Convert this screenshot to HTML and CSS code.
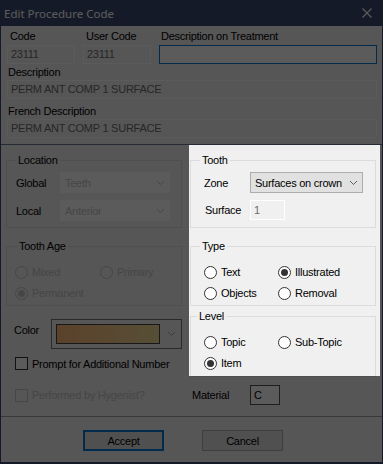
FILE: index.html
```html
<!DOCTYPE html>
<html lang="en">
<head>
  <meta charset="UTF-8">
  <title>Edit Procedure Code</title>
  <link rel="stylesheet" href="styles.css">
</head>
<body>
  <div class="window">
    <div class="titlebar">
      <span class="title">Edit Procedure Code</span>
      <svg class="close" width="10" height="10" viewBox="0 0 10 10"><path d="M0.5 0.5 L9.5 9.5 M9.5 0.5 L0.5 9.5" stroke="#fff" stroke-width="1.2" fill="none"/></svg>
    </div>

    <div class="top">
      <div class="code-row">
        <div class="field code">
          <label>Code</label>
          <div class="edit disabled">23111</div>
        </div>
        <div class="field code">
          <label>User Code</label>
          <div class="edit disabled">23111</div>
        </div>
        <div class="field grow">
          <label class="tight">Description on Treatment</label>
          <div class="edit focused"></div>
        </div>
      </div>
      <label class="lbl lbl-desc">Description</label>
      <div class="edit disabled">PERM ANT COMP 1 SURFACE</div>
      <label class="lbl lbl-french">French Description</label>
      <div class="edit disabled">PERM ANT COMP 1 SURFACE</div>
    </div>

    <div class="panel">
      <div class="col">
        <fieldset class="group location">
          <legend>Location</legend>
          <div class="form-grid left-grid">
            <span>Global</span>
            <div class="combo off">Teeth<svg class="chev" width="7" height="4" viewBox="0 0 7 4"><path d="M0 0 L3.5 3.5 L7 0" fill="none" stroke="#fff"/></svg></div>
            <span>Local</span>
            <div class="combo off">Anterior<svg class="chev" width="7" height="4" viewBox="0 0 7 4"><path d="M0 0 L3.5 3.5 L7 0" fill="none" stroke="#fff"/></svg></div>
          </div>
        </fieldset>

        <fieldset class="group age">
          <legend>Tooth Age</legend>
          <div class="radios age-radios">
            <span class="radio off"><i></i>Mixed</span>
            <span class="radio off"><i></i>Primary</span>
            <span class="radio off checked"><i></i>Permanent</span>
          </div>
        </fieldset>

        <div class="color-row">
          <span class="color-label">Color</span>
          <div class="color-combo">
            <div class="swatch"></div>
            <svg class="chev" width="7" height="4" viewBox="0 0 7 4"><path d="M0 0 L3.5 3.5 L7 0" fill="none" stroke="#aaa"/></svg>
          </div>
        </div>

        <div class="check"><i></i>Prompt for Additional Number</div>
      </div>

      <div class="col">
        <fieldset class="group tooth">
          <legend>Tooth</legend>
          <div class="form-grid right-grid">
            <span>Zone</span>
            <div class="combo zone">Surfaces on crown<svg class="chev" width="7" height="4" viewBox="0 0 7 4"><path d="M0 0 L3.5 3.5 L7 0" fill="none" stroke="#606060"/></svg></div>
            <span class="surface-lbl">Surface</span>
            <div class="edit disabled surface">1</div>
          </div>
        </fieldset>

        <fieldset class="group type">
          <legend>Type</legend>
          <div class="radios">
            <span class="radio"><i></i>Text</span>
            <span class="radio checked"><i></i>Illustrated</span>
            <span class="radio"><i></i>Objects</span>
            <span class="radio"><i></i>Removal</span>
          </div>
        </fieldset>

        <fieldset class="group level">
          <legend>Level</legend>
          <div class="radios">
            <span class="radio"><i></i>Topic</span>
            <span class="radio"><i></i>Sub-Topic</span>
            <span class="radio checked"><i></i>Item</span>
          </div>
        </fieldset>
      </div>

      <div class="check off hyg"><i></i>Performed by Hygenist?</div>

      <div class="material">
        <span>Material</span>
        <div class="edit mat">C</div>
      </div>
    </div>

    <div class="footer">
      <button class="btn default">Accept</button>
      <button class="btn">Cancel</button>
    </div>

    <!-- dims everything except the tooth / type / level block -->
    <div class="spotlight"></div>
  </div>
</body>
</html>
```

FILE: styles.css
```css
* {
  box-sizing: border-box;
}
body {
  margin: 0;
  font-family: "Liberation Sans", Arial, sans-serif;
  font-size: 11px;
  letter-spacing: -0.25px;
  color: #000;
  background: #f0f0f0;
}
.window {
  position: relative;
  width: 383px;
  height: 464px;
  background: #f0f0f0;
  border: 1px solid #3a4a70;
  border-top: 0;
  border-bottom-width: 2px;
}

/* title bar */
.titlebar {
  height: 26px;
  background: #3a4a70;
  display: flex;
  align-items: center;
  justify-content: space-between;
  padding: 0 10px 0 3px;
  color: #fff;
  font-family: "Noto Sans", sans-serif;
  font-size: 11.5px;
  letter-spacing: 0;
}

/* code / description block */
.top {
  padding: 3px 5px 0 6px;
}
.code-row {
  display: flex;
  gap: 8px;
}
.field.code {
  width: 68px;
}
.field.grow {
  flex: 1;
}
.field label {
  display: block;
  line-height: 14px;
  padding-left: 3px;
  margin-bottom: 2px;
}
.field label.tight {
  padding-left: 2px;
}
.lbl {
  display: block;
  line-height: 14px;
  padding-left: 1px;
  margin-bottom: 1px;
}
.lbl-desc {
  margin-top: 1px;
}
.lbl-french {
  margin-top: 5px;
}
.edit {
  height: 19px;
  line-height: 17px;
  padding: 0 3px;
  border: 1px solid #7a7a7a;
  background: #fff;
  white-space: nowrap;
}
.edit.disabled {
  background: #f0f0f0;
  border-color: #fff;
  color: #6d6d6d;
}
.edit.focused {
  border-color: #0078d7;
}

/* middle panel */
.panel {
  margin-top: 6px;
  border-top: 1px solid #6a7890;
  padding: 8px 6px 0 5px;
  display: grid;
  grid-template-columns: 176px 186px;
  column-gap: 8px;
  row-gap: 8px;
}
.group {
  margin: 0;
  border: 1px solid #dcdcdc;
  min-width: 0;
}
.group legend {
  padding: 0 2px;
  line-height: 14px;
}
.location {
  padding: 5px 10px 6px 9px;
}
.age {
  margin-top: 11px;
  padding: 11px 6px 4px 8px;
}
.age legend {
  margin-left: 2px;
}
.tooth {
  padding: 5px 12px 7px 13px;
}
.tooth legend,
.type legend {
  margin-left: -4px;
}
.type {
  margin-top: 11px;
  padding: 11px 6px 4px 13px;
}
.level {
  margin-top: 3px;
  padding: 11px 6px 5px 13px;
}
.level legend {
  margin-left: -7px;
}

.form-grid {
  display: grid;
  row-gap: 7px;
  align-items: center;
}
.left-grid {
  grid-template-columns: 44px 110px;
}
.right-grid {
  grid-template-columns: 46px 113px;
}
.surface-lbl {
  padding-left: 1px;
}
.combo {
  height: 21px;
  display: flex;
  align-items: center;
  justify-content: space-between;
  padding: 0 5px 0 4px;
  border: 1px solid #adadad;
  background: #e1e1e1;
  white-space: nowrap;
}
.combo.off {
  border-color: #fff;
  background: #fff;
  color: #c4c4c4;
}
.combo.off .chev path {
  stroke: #c4c4c4;
}
.edit.surface {
  width: 35px;
  height: 20px;
  line-height: 18px;
}

/* radios */
.radios {
  display: grid;
  grid-template-columns: 74px 1fr;
  row-gap: 5px;
}
.age-radios {
  grid-template-columns: 85px 1fr;
}
.radio {
  display: flex;
  align-items: center;
  gap: 4px;
  height: 16px;
  white-space: nowrap;
}
.radio i {
  width: 13px;
  height: 13px;
  border: 1px solid #333;
  border-radius: 50%;
  background: #fff;
  display: flex;
  align-items: center;
  justify-content: center;
}
.radio.checked i::after {
  content: "";
  width: 7px;
  height: 7px;
  border-radius: 50%;
  background: #333;
}
.radio.off {
  color: #c4c4c4;
}
.radio.off i {
  border-color: #c4c4c4;
  background: #f0f0f0;
}
.radio.off.checked i::after {
  background: #c4c4c4;
}

/* color picker */
.color-row {
  display: flex;
  margin-top: 13px;
  padding-left: 8px;
}
.color-label {
  width: 37px;
  margin-top: 4px;
  line-height: 14px;
}
.color-combo {
  width: 131px;
  height: 30px;
  border: 1px solid #777;
  padding: 4px 6px 4px 4px;
  display: flex;
  align-items: center;
  justify-content: space-between;
}
.swatch {
  width: 104px;
  height: 20px;
  border: 1px solid #444;
  background: linear-gradient(to right, #ffb878, #f6d090 70%, #f0dc98);
}

/* checkboxes */
.check {
  display: flex;
  align-items: center;
  gap: 4px;
  margin-top: 8px;
  padding-left: 9px;
  height: 13px;
  white-space: nowrap;
}
.check i {
  width: 13px;
  height: 13px;
  border: 1px solid #333;
  background: #fff;
}
.check.off {
  color: #c4c4c4;
}
.check.off i {
  border-color: #c4c4c4;
  background: #f0f0f0;
}
.check.hyg {
  margin-top: 0;
  height: 20px;
}
.material {
  display: flex;
  align-items: center;
  padding-left: 2px;
  height: 20px;
}
.material span {
  width: 58px;
}
.edit.mat {
  width: 30px;
  height: 20px;
  line-height: 18px;
  border-color: #555;
}

/* buttons */
.footer {
  margin-top: 11px;
  border-top: 1px solid #a0a0a0;
  padding: 13px 0 0 82px;
  display: flex;
  gap: 38px;
}
.btn {
  width: 81px;
  height: 21px;
  padding: 0;
  font-family: "Liberation Sans", Arial, sans-serif;
  font-size: 11px;
  letter-spacing: -0.25px;
  color: #000;
  background: #e1e1e1;
  border: 1px solid #adadad;
}
.btn.default {
  border: 2px solid #0078d7;
}

.spotlight {
  position: absolute;
  left: 188px;
  top: 145px;
  width: 191px;
  height: 231px;
  box-shadow: 0 0 0 2000px rgba(0, 0, 0, 0.645);
  pointer-events: none;
}
```
